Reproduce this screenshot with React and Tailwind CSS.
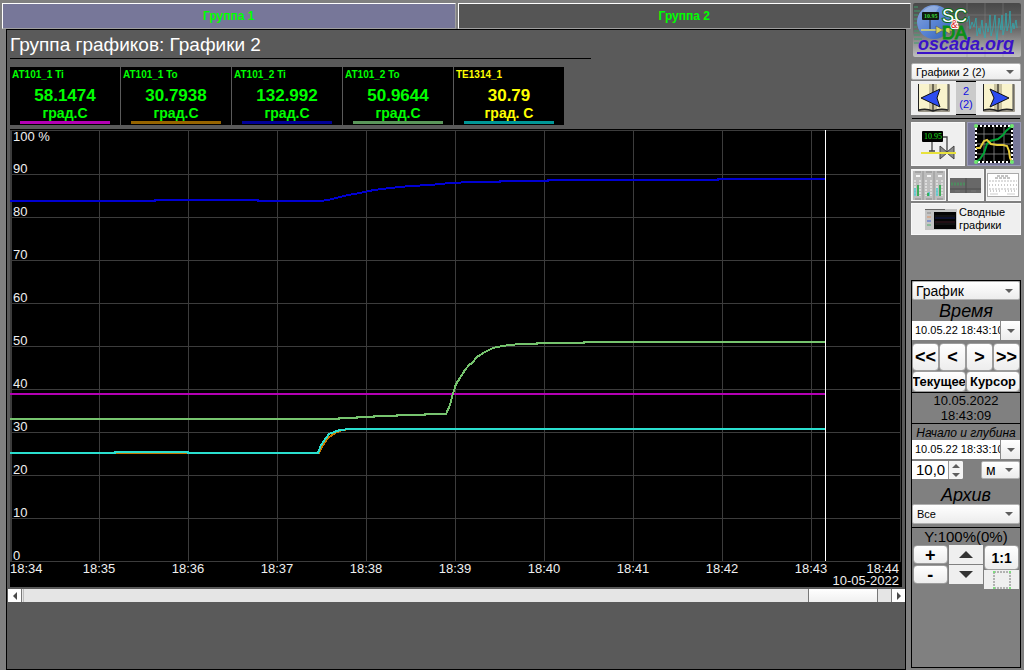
import React from "react";

const TAGS = [
  { name: "AT101_1 Ti", value: "58.1474", unit: "град.С", text: "text-[#00ff00]", bar: "bg-[#b400b4]" },
  { name: "AT101_1 To", value: "30.7938", unit: "град.С", text: "text-[#00ff00]", bar: "bg-[#966400]" },
  { name: "AT101_2 Ti", value: "132.992", unit: "град.С", text: "text-[#00ff00]", bar: "bg-[#000096]" },
  { name: "AT101_2 To", value: "50.9644", unit: "град.С", text: "text-[#00ff00]", bar: "bg-[#5a965a]" },
  { name: "TE1314_1", value: "30.79", unit: "град. С", text: "text-[#ffff00]", bar: "bg-[#009696]" },
];

const TIMES = ["18:34", "18:35", "18:36", "18:37", "18:38", "18:39", "18:40", "18:41", "18:42", "18:43", "18:44"];
const LEVELS = ["100 %", "90", "80", "70", "60", "50", "40", "30", "20", "10", "0"];

const TRENDS = [
  {
    color: "#0000d2",
    points: "0,72 145,72 145,71 248,71 248,72 310,72 318,71 326,69 338,66 350,64 364,61 380,59 400,57 420,56 440,54 462,53 490,53 490,52 538,52 538,51 708,51 708,50 815,50",
  },
  { color: "#b400b4", points: "0,265 815,265" },
  {
    color: "#76c46e",
    points: "0,290 329,290 329,289 347,289 347,288 364,288 364,287 387,287 387,286 415,286 415,285 436,285 440,276 442,268 446,255 450,249 455,241 459,236 462,234 467,228 475,223 483,219 492,217 501,216 510,215 527,215 527,214 574,214 574,213 815,213",
  },
  { color: "#c87800", points: "0,324 309,324 313,316 318,309 322,306 325,304 332,301 340,300 815,300" },
  {
    color: "#2adfcf",
    points: "0,324 105,324 105,323 178,323 178,324 308,324 311,316 316,309 319,305 324,303 330,301 340,300 815,300",
  },
];

const btn =
  "flex items-center justify-center border border-[#9c9c9c] rounded-sm bg-linear-to-b from-white to-[#ededed] text-black";
const iconBtn = "flex items-center justify-center bg-[#efefef] border border-[#f8f8f8]";

function Arrow({ className }) {
  return (
    <svg className={className} width="8" height="4" viewBox="0 0 8 4" aria-hidden="true">
      <path d="M0 0h8L4 4z" fill="#5e5e5e" />
    </svg>
  );
}

function Select({ label, value, className }) {
  return (
    <div className="relative">
      <select
        aria-label={label}
        className={`block w-full appearance-none rounded-xs border border-[#b0b0b0] bg-linear-to-b from-white to-[#ececec] text-black ${className}`}
      >
        <option>{value}</option>
      </select>
      <Arrow className="pointer-events-none absolute right-[7px] top-1/2 -translate-y-1/2" />
    </div>
  );
}

function DateField({ label, value }) {
  return (
    <div className="flex h-[19px]">
      <input
        type="text"
        aria-label={label}
        defaultValue={value}
        className="min-w-0 flex-1 bg-white pl-[3px] text-[11px] text-black outline-none"
      />
      <button
        aria-label={`${label}: календарь`}
        className="flex w-5 items-center justify-center border-l border-[#8a8a8a] bg-linear-to-b from-white to-[#ececec]"
      >
        <Arrow />
      </button>
    </div>
  );
}

function TagCard({ tag }) {
  return (
    <div className={`h-[58px] bg-black font-bold ${tag.text}`}>
      <div className="pl-[2px] text-[10px] leading-4">{tag.name}</div>
      <div className="mt-[3px] text-center text-[17px] leading-5">{tag.value}</div>
      <div className="pb-px text-center text-sm leading-[14px]">{tag.unit}</div>
      <div className={`mx-[10px] h-[3px] ${tag.bar}`} />
    </div>
  );
}

function TrendChart() {
  return (
    <svg viewBox="0 0 892 458" className="block h-auto w-full bg-black" role="img" aria-label="Графики 2">
      <g fill="#3c3c3c">
        <rect x="0" y="1" width="2" height="431" />
        {TIMES.map((t, i) => i > 0 && <rect key={t} x={i * 89} y="1" width="1" height="431" />)}
        {LEVELS.map((l, i) => (
          <rect key={l} x="0" y={i === 0 ? 1 : 2 + i * 43} width="891" height="1" />
        ))}
      </g>
      {TRENDS.map((t) => (
        <polyline key={t.color} points={t.points} fill="none" stroke={t.color} strokeWidth="2" shapeRendering="crispEdges" />
      ))}
      <rect x="815" y="1" width="1" height="431" fill="#fff" />
      <g fill="#f0f0f0" fontSize="13">
        {LEVELS.map((l, i) => (
          <text key={l} x="3" y={i === 0 ? 12 : 1 + i * 43}>
            {l}
          </text>
        ))}
        {TIMES.map((t, i) => {
          if (i === 0) return <text key={t} x="0" y="444">{t}</text>;
          if (i === 10) return <text key={t} x="889" y="444" textAnchor="end">{t}</text>;
          return <text key={t} x={i * 89} y="444" textAnchor="middle">{t}</text>;
        })}
        <text x="889" y="456" textAnchor="end">10-05-2022</text>
      </g>
    </svg>
  );
}

function ScrollBar() {
  return (
    <div className="mt-[2px] flex h-[13px] bg-[#e5e5e5]">
      <button aria-label="Назад" className="flex w-[14px] items-center justify-center border-r border-[#777] bg-white">
        <svg width="4" height="8" viewBox="0 0 4 8"><path d="M4 0v8L0 4z" fill="#4a4a4a" /></svg>
      </button>
      <div className="ml-px w-px bg-[#bdbdbd]" />
      <div className="flex-1" />
      <div className="w-[70px] border-x border-[#777] bg-linear-to-b from-white to-[#f0f0f0]" />
      <div className="w-[13px]" />
      <button aria-label="Вперёд" className="flex w-[14px] items-center justify-center border-l border-[#777] bg-white">
        <svg width="4" height="8" viewBox="0 0 4 8"><path d="M0 0v8l4-4z" fill="#4a4a4a" /></svg>
      </button>
    </div>
  );
}

function Logo() {
  return (
    <svg viewBox="0 0 108 54" className="block h-auto w-full" role="img" aria-label="oscada.org">
      <defs>
        <linearGradient id="logoBg" x1="0" y1="0" x2="0" y2="1">
          <stop offset="0" stopColor="#484848" />
          <stop offset="0.5" stopColor="#6c6c6c" />
          <stop offset="1" stopColor="#c0c0c0" />
        </linearGradient>
        <linearGradient id="globe" x1="0" y1="0" x2="1" y2="1">
          <stop offset="0" stopColor="#8aa6da" />
          <stop offset="0.5" stopColor="#5a85d4" />
          <stop offset="1" stopColor="#3462b8" />
        </linearGradient>
      </defs>
      <rect width="108" height="54" rx="2" fill="url(#logoBg)" />
      <path d="M54 0v54M72 0v54M90 0v54M54 12h54M54 24h54M54 36h54" stroke="#909090" strokeWidth="0.4" />
      <path d="M1 4h4M1 8h6M1 12h4M1 16h3M1 20h4M1 24h3M1 28h5M1 32h6M1 36h8M1 40h5" stroke="#3f9c6c" />
      <path
        d="M54 19l2-6 1 13 2-7 2 5 2-9 1 18 2-8 1 6 2-14 1 10 2 8 1-15 2 9 1-5 1-12 1 21 2-8 2-13 1 17 1 8 2-22 2 12 1-15 1 20 2-8 1-14 1 18 2-8 1-12 1 22 2-10 1 6 2-9 1 8"
        fill="none"
        stroke="#2fa9b0"
        strokeWidth="0.8"
      />
      <circle cx="21" cy="19" r="17" fill="url(#globe)" />
      <path d="M10 8q8-7 16-4l-3 5-9 2z" fill="#c4d4f0" opacity="0.4" />
      <path d="M17 17v9" stroke="#222" />
      <rect x="9" y="9" width="17" height="8" rx="1" fill="#101810" />
      <text x="11" y="15" fontSize="6" fontFamily="Liberation Serif, serif" fontWeight="bold" fill="#39d839">10.95</text>
      <path d="M8 27h31" stroke="#e0d868" strokeWidth="1.5" />
      <path d="M23 23l7 4-7 4zM37 23l-7 4 7 4z" fill="#d8d060" stroke="#555" strokeWidth="0.6" />
      <text x="29" y="36" fontSize="18" fill="#0a8f16" stroke="#0a8f16">DA</text>
      <text x="29" y="19" fontSize="18" fill="#fff" stroke="#0a6a18" strokeWidth="2" paintOrder="stroke">SC</text>
      <text x="38" y="25" fontSize="10" fill="#d81818" stroke="#fff" strokeWidth="2" paintOrder="stroke">&amp;</text>
      <text x="5" y="47" fontSize="18" fontWeight="bold" fontStyle="italic" fill="#3a12c8">oscada.org</text>
      <path d="M4 50h97" stroke="#3a12c8" strokeWidth="2" />
    </svg>
  );
}

function BookIcon({ forward }) {
  return (
    <svg width="34" height="30" viewBox="0 0 34 30" aria-hidden="true">
      <rect x="1" y="1" width="32" height="28" rx="1" fill="#77715c" opacity="0.7" />
      <rect x="1" y="1" width="1" height="27" fill="#222" />
      <rect x="2" y="1" width="29" height="26" fill="#f9f3cc" />
      <path d="M12 1h3v26h-3zM17 1h3v26h-3z" fill="#aaa482" opacity="0.6" />
      <path d="M16 1v26" stroke="#38352a" strokeWidth="1.5" />
      <path d="M2 27q7-2 14 1 7-3 15-1" fill="none" stroke="#222" strokeWidth="1.5" />
      <path d="M31 1v26" stroke="#444" />
      {forward ? (
        <path d="M8 6l19 9-19 9 4-9z" fill="#2c4cf0" stroke="#101010" />
      ) : (
        <path d="M23 6L4 15l19 9-3-9z" fill="#2c4cf0" stroke="#101010" />
      )}
    </svg>
  );
}

function MimicIcon() {
  return (
    <svg width="38" height="34" viewBox="0 0 38 34" aria-hidden="true">
      <rect x="3" y="4" width="21" height="11" rx="1" fill="#000" />
      <text x="5" y="12" fontSize="8" fontFamily="Liberation Serif, serif" fill="#1fe01f">10.95</text>
      <path d="M24 10h4v15M13 15v9M10 24h6" fill="none" stroke="#444" strokeWidth="1.3" />
      <path d="M21 19v13l7-6 7 6V19l-7 6z" fill="#8a8a8a" stroke="#444" />
      <path d="M2 26h35" stroke="#e8e23c" strokeWidth="2" />
    </svg>
  );
}

function GraphIcon() {
  return (
    <svg width="42" height="42" viewBox="0 0 42 42" aria-hidden="true">
      <rect x="2" y="2" width="38" height="38" fill="#000" />
      <path d="M11 3v36M21 3v36M31 3v36M3 11h36M3 21h36M3 31h36" stroke="#8c8c8c" strokeWidth="0.8" />
      <rect x="3" y="3" width="36" height="36" fill="none" stroke="#fff" strokeWidth="2" strokeDasharray="2 2" />
      <path d="M3 39l4-3 4-6 3-9 3-3 8-2 5-4 3-4 6-5" fill="none" stroke="#00a436" strokeWidth="2" />
      <path d="M3 25h4l4-7 3-1 4 4 6 1h6l4 1 2 5 1 7 2 4" fill="none" stroke="#e6cc3c" strokeWidth="2" />
      <g fill="#6fe86f">
        <circle cx="3" cy="3" r="2" />
        <circle cx="39" cy="3" r="2" />
        <circle cx="3" cy="39" r="2" />
        <circle cx="39" cy="39" r="2" />
      </g>
    </svg>
  );
}

function BarsIcon() {
  return (
    <svg width="32" height="29" viewBox="0 0 32 29" aria-hidden="true">
      <rect width="32" height="29" fill="#bdbdbd" />
      <path d="M10 0v29M21 0v29" stroke="#8c8c8c" strokeWidth="0.8" />
      {[0, 11, 22].map((x, i) => (
        <g key={x} transform={`translate(${x} 0)`}>
          <path d="M2 1h6M2 28h6" stroke="#8a8a8a" />
          <rect x="3" y="4" width="4" height="2" fill="#f4f4f4" />
          <path d="M2 9v16M7 9v16" stroke="#dcdcdc" strokeWidth="2" strokeDasharray="2 1" />
          <path d={i === 1 ? "M5 21v4" : "M2 17v8"} stroke="#4cc8d0" strokeWidth="1.5" />
          <path d={i === 1 ? "M4 22v3" : "M5 14v11"} stroke="#16a838" strokeWidth="1.5" />
        </g>
      ))}
    </svg>
  );
}

function PanelIcon() {
  return (
    <svg width="31" height="15" viewBox="0 0 31 15" aria-hidden="true">
      <rect width="31" height="15" fill="#686868" />
      <path d="M16 0v15M0 11h31" stroke="#4c4c4c" />
      <path d="M1 6h14" stroke="#4f8a60" strokeWidth="3" strokeDasharray="2 1" />
      <path d="M5 13h5M21 13h5" stroke="#777" />
    </svg>
  );
}

function DocIcon() {
  return (
    <svg width="32" height="24" viewBox="0 0 32 24" aria-hidden="true">
      <rect width="32" height="24" fill="#aaa" />
      <rect x="1" y="1" width="30" height="22" fill="#fff" />
      <path d="M10 3h12M8 5h16" stroke="#888" strokeDasharray="3 1" />
      <path d="M2 8h28M2 16h28" stroke="#bbb" strokeDasharray="2 1" />
      <path d="M2 12h28M3 18h10M18 18h11" stroke="#999" strokeDasharray="1 2" />
      <path d="M3 21h8M20 21h8" stroke="#ccc" />
    </svg>
  );
}

function SummaryIcon() {
  return (
    <svg width="32" height="21" viewBox="0 0 32 21" aria-hidden="true">
      <rect width="32" height="21" fill="#c4c4c4" />
      <rect width="20" height="1" fill="#666" />
      <rect x="9" y="3" width="22" height="17" fill="#050505" />
      <path d="M10 7h20M10 15h20" stroke="#333" strokeWidth="0.6" />
      <path d="M10 9h20" stroke="#1c2c80" strokeWidth="0.7" />
      <path d="M10 13h20" stroke="#5a2430" strokeWidth="0.7" />
      <path d="M2 4h4" stroke="#888" />
      <path d="M2 8h4" stroke="#e09060" />
      <path d="M2 12h4" stroke="#4060d0" />
      <path d="M2 16h4" stroke="#50b070" />
    </svg>
  );
}

function Sidebar() {
  return (
    <aside className="flex w-[110px] shrink-0 flex-col">
      <div className="pl-[2px]">
        <Logo />
      </div>
      <div className="mt-[6px]">
        <Select label="Группа" value="Графики 2 (2)" className="h-[17px] pl-1 text-[11px] leading-[14px]" />
      </div>

      <div className="mt-px flex h-[34px]">
        <button aria-label="Предыдущая" className="flex flex-1 items-center justify-center bg-[#efefef]">
          <BookIcon />
        </button>
        <div className="flex w-5 flex-col justify-center border-y border-black bg-[#cacaca] text-center text-[11px] leading-[13px] text-[#1010e0]">
          <span>2</span>
          <span>(2)</span>
        </div>
        <button aria-label="Следующая" className="flex flex-1 items-center justify-center bg-[#efefef]">
          <BookIcon forward />
        </button>
      </div>
      <div className="mx-px mt-[3px] h-px bg-black" />

      <div className="mt-[3px] grid grid-cols-2 gap-[2px]">
        <button aria-label="Мнемосхемы" className={`h-[44px] ${iconBtn}`}>
          <MimicIcon />
        </button>
        <button aria-label="Графики" className="flex h-[44px] items-center justify-center border border-[#9a9ab8] bg-[#777799]">
          <GraphIcon />
        </button>
      </div>
      <div className="mt-[3px] grid grid-cols-3 gap-[2px]">
        <button aria-label="Контуры" className={`h-8 ${iconBtn}`}>
          <BarsIcon />
        </button>
        <button aria-label="Обзор" className={`h-8 ${iconBtn}`}>
          <PanelIcon />
        </button>
        <button aria-label="Документы" className={`h-8 ${iconBtn}`}>
          <DocIcon />
        </button>
      </div>
      <button className={`mt-[2px] h-8 gap-[2px] pr-[2px] text-left text-[11px] leading-[13px] text-black ${iconBtn}`}>
        <SummaryIcon />
        <span>
          Сводные
          <br />
          графики
        </span>
      </button>

      <section className="mb-[2px] mt-[45px] flex flex-1 flex-col border border-black bg-[#808080] text-black">
        <Select label="Вид" value="График" className="h-[19px] pl-[3px] text-sm leading-4" />
        <h2 className="h-[21px] overflow-hidden text-center text-lg leading-[23px] italic">Время</h2>
        <DateField label="Время" value="10.05.22 18:43:10" />
        <div className="mt-[3px] grid grid-cols-4 text-lg leading-6 font-bold">
          <button className={`h-7 ${btn}`}>&lt;&lt;</button>
          <button className={`h-7 ${btn}`}>&lt;</button>
          <button className={`h-7 ${btn}`}>&gt;</button>
          <button className={`h-7 ${btn}`}>&gt;&gt;</button>
        </div>
        <div className="grid grid-cols-2 text-[13px] font-bold">
          <button className={`h-[21px] overflow-hidden ${btn}`}>Текущее</button>
          <button className={`h-[21px] overflow-hidden ${btn}`}>Курсор</button>
        </div>
        <div className="border-y border-black text-center text-[13px] leading-[15px]">
          10.05.2022
          <br />
          18:43:09
        </div>
        <h3 className="h-4 overflow-hidden text-center text-xs leading-[18px] whitespace-nowrap italic">Начало и глубина</h3>
        <DateField label="Начало" value="10.05.22 18:33:10" />
        <div className="mt-[2px] flex justify-between">
          <div className="flex h-[18px] w-[51px] overflow-hidden rounded-r-xs bg-white">
            <input
              type="text"
              aria-label="Глубина"
              defaultValue="10,0"
              className="w-9 pl-1 text-[15px] text-black outline-none"
            />
            <div className="flex flex-1 flex-col border-l border-[#999] bg-[#f4f4f4]">
              <button aria-label="Больше" className="flex flex-1 items-center justify-center">
                <Arrow className="rotate-180" />
              </button>
              <button aria-label="Меньше" className="flex flex-1 items-center justify-center">
                <Arrow />
              </button>
            </div>
          </div>
          <div className="w-[39px]">
            <Select label="Единица" value="м" className="h-[18px] pl-1 text-sm leading-4" />
          </div>
        </div>
        <h2 className="mt-[5px] h-5 overflow-hidden text-center text-lg leading-[22px] italic">Архив</h2>
        <Select label="Архив" value="Все" className="h-5 pl-1 text-[11px] leading-4" />
        <div className="mt-[3px] border-t border-black text-center text-[15px] leading-[17px]">Y:100%(0%)</div>
        <div className="flex gap-px px-px text-lg font-bold">
          <div className="grid flex-1 content-start gap-px">
            <button className={`h-[19px] ${btn}`}>+</button>
            <button className={`h-[19px] ${btn}`}>-</button>
          </div>
          <div className="grid flex-1 content-start gap-px">
            <button aria-label="Вверх" className="flex h-[19px] items-center justify-center bg-[#efefef]">
              <svg width="14" height="7" viewBox="0 0 14 7"><path d="M0 7h14L7 0z" fill="#333" /></svg>
            </button>
            <button aria-label="Вниз" className="flex h-[19px] items-center justify-center bg-[#efefef]">
              <svg width="14" height="7" viewBox="0 0 14 7"><path d="M0 0h14L7 7z" fill="#333" /></svg>
            </button>
          </div>
          <div className="grid flex-1 content-start">
            <button className={`h-[25px] text-sm ${btn}`}>1:1</button>
            <button aria-label="Область" className="flex h-[19px] items-center justify-center bg-[#efefef]">
              <svg width="18" height="18" viewBox="0 0 18 18" className="shrink-0">
                <path d="M1 1h16M1 17h16M1 1v16M17 1v16" fill="none" stroke="#777" strokeDasharray="2 1" />
                <path d="M0 1h2M16 1h2M0 17h2M16 17h2" stroke="#7ddc7d" strokeWidth="2" />
              </svg>
            </button>
          </div>
        </div>
      </section>
    </aside>
  );
}

export default function App() {
  return (
    <div className="flex min-h-screen bg-[#808080] pt-[3px] pr-[3px] pl-[2px] font-['Liberation_Sans',Arial,sans-serif]">
      <main className="flex min-w-0 flex-1 flex-col">
        <nav className="grid grid-cols-2 gap-[2px] text-xs font-bold text-[#00ff00]">
          <button className="h-[26px] border border-t-white border-r-[#a0a0a0] border-b-[#a0a0a0] border-l-white bg-[#777799]">
            Группа 1
          </button>
          <button className="h-[26px] border border-t-white border-r-[#a0a0a0] border-b-[#a0a0a0] border-l-white bg-[#555555]">
            Группа 2
          </button>
        </nav>
        <div className="mr-[5px] ml-1 flex-1 border border-black bg-[#5a5a5a]">
          <div className="px-[3px]">
            <h1 className="max-w-[581px] border-b border-black pt-1 pb-[2px] text-[19px] leading-[22px] text-white">
              Группа графиков: Графики 2
            </h1>
            <div className="mt-2 grid w-[554px] grid-cols-5 gap-px">
              {TAGS.map((tag) => (
                <TagCard key={tag.name} tag={tag} />
              ))}
            </div>
            <div className="mt-1">
              <TrendChart />
            </div>
          </div>
          <div className="ml-px">
            <ScrollBar />
          </div>
        </div>
      </main>
      <Sidebar />
    </div>
  );
}
